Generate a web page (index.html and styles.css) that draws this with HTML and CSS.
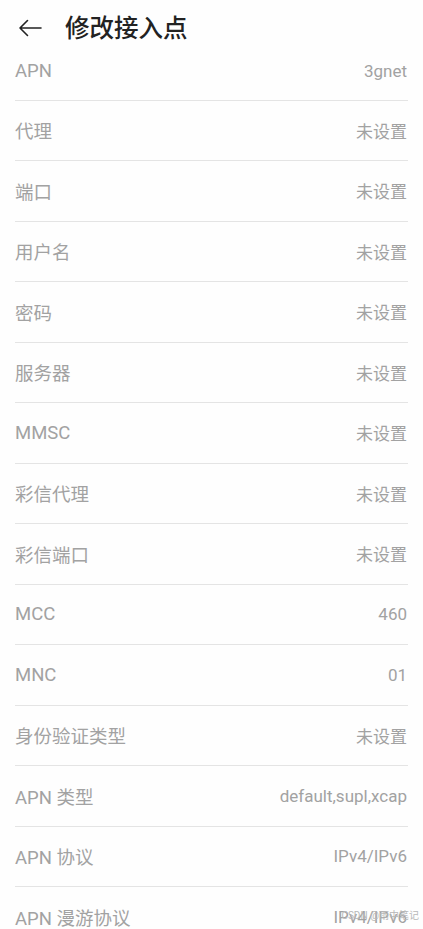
FILE: index.html
```html
<!DOCTYPE html>
<html>
<head>
    <meta charset="UTF-8">
    <title>修改接入点</title>
    <link rel="stylesheet" href="styles.css">
</head>
<body>

<div class="header">
    <svg class="back" width="24" height="18" viewBox="0 0 24 18">
        <path d="M23 9H2M9.5 1.5L2 9l7.5 7.5" fill="none" stroke="#222" stroke-width="1.6" stroke-linecap="round" stroke-linejoin="round"/>
    </svg>
    <div class="title">修改接入点</div>
</div>

<div class="list">
    <div class="row first"><span class="name">APN</span><span class="value">3gnet</span></div>
    <div class="row"><span class="name">代理</span><span class="value">未设置</span></div>
    <div class="row"><span class="name">端口</span><span class="value">未设置</span></div>
    <div class="row"><span class="name">用户名</span><span class="value">未设置</span></div>
    <div class="row"><span class="name">密码</span><span class="value">未设置</span></div>
    <div class="row"><span class="name">服务器</span><span class="value">未设置</span></div>
    <div class="row"><span class="name">MMSC</span><span class="value">未设置</span></div>
    <div class="row"><span class="name">彩信代理</span><span class="value">未设置</span></div>
    <div class="row"><span class="name">彩信端口</span><span class="value">未设置</span></div>
    <div class="row"><span class="name">MCC</span><span class="value">460</span></div>
    <div class="row"><span class="name">MNC</span><span class="value">01</span></div>
    <div class="row"><span class="name">身份验证类型</span><span class="value">未设置</span></div>
    <div class="row"><span class="name">APN 类型</span><span class="value">default,supl,xcap</span></div>
    <div class="row"><span class="name">APN 协议</span><span class="value">IPv4/IPv6</span></div>
    <div class="row"><span class="name">APN 漫游协议</span><span class="value">IPv4/IPv6</span></div>
</div>

<div class="mark">CSDN @雨中笔记</div>

</body>
</html>
```

FILE: styles.css
```css
body {
    margin: 0;
    background: #fefefe;
    font-family: Roboto, "Noto Sans CJK SC", sans-serif;
    overflow: hidden;
    height: 929px;
    position: relative;
}

.header {
    height: 42px;
    display: flex;
    align-items: flex-start;
    padding: 19px 0 0 18px;
    box-sizing: border-box;
}

.back {
    display: block;
}

.title {
    margin-left: 23px;
    margin-top: -5px;
    font-size: 24.5px;
    line-height: 30px;
    font-weight: 500;
    color: #222222;
}

.list {
    padding: 0 15px;
}

.row {
    height: 59.5px;
    display: flex;
    align-items: center;
    justify-content: space-between;
    border-bottom: 1px solid #e4e4e4;
}

.row.first {
    height: 57.5px;
}

.name {
    font-size: 18.5px;
    color: #a2a2a2;
}

.value {
    font-size: 17px;
    color: #a2a2a2;
    padding-right: 1px;
}

.mark {
    position: absolute;
    right: 4px;
    bottom: 7px;
    font-size: 10px;
    color: #b8b8b8;
}
```
